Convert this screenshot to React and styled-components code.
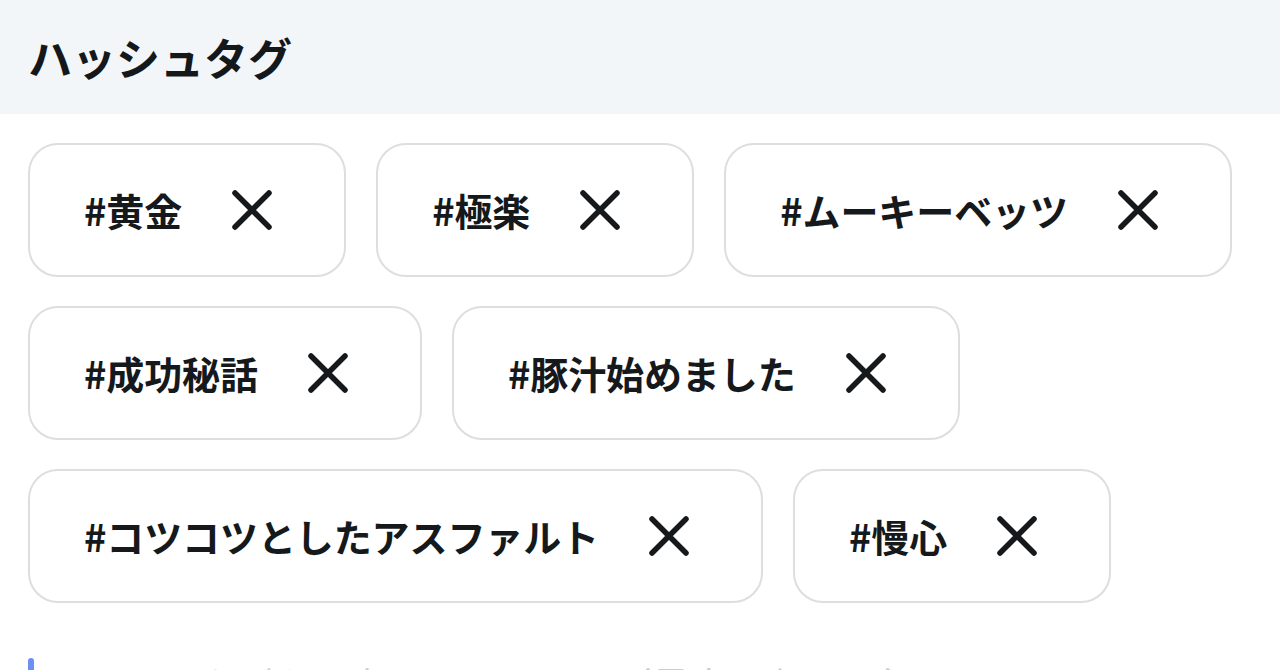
import React from "react";
import styled, { createGlobalStyle } from "styled-components";

const Global = createGlobalStyle`
  html, body { margin: 0; padding: 0; background: #ffffff; }
  body {
    font-family: "Noto Sans CJK JP", "Noto Sans", sans-serif;
    color: #14181b;
    overflow: hidden;
  }
`;

const Page = styled.div`
  width: 1280px;
  height: 670px;
  overflow: hidden;
  background: #ffffff;
`;

const Header = styled.header`
  height: 114px;
  background: #f3f6f9;
  display: flex;
  align-items: center;
  padding-left: 28px;
  box-sizing: border-box;
`;

const Title = styled.h1`
  margin: 0;
  font-size: 44px;
  font-weight: 700;
  letter-spacing: 0;
  color: #14181b;
  line-height: 1;
`;

const TagList = styled.div`
  display: flex;
  flex-wrap: wrap;
  gap: 29px 30px;
  padding: 29px 28px 0;
  width: 1280px;
  box-sizing: border-box;
`;

const Chip = styled.div`
  display: inline-flex;
  align-items: center;
  height: 134px;
  box-sizing: border-box;
  border: 2.5px solid #dedede;
  border-radius: 30px;
  padding: 0 72px 0 54px;
  background: #fff;
`;

const ChipLabel = styled.span`
  font-size: 38px;
  font-weight: 600;
  letter-spacing: -0.1px;
  line-height: 1;
  color: #15191c;
  white-space: nowrap;
`;

const RemoveButton = styled.button`
  border: none;
  background: none;
  padding: 0;
  margin-left: 50px;
  width: 40px;
  height: 40px;
  display: flex;
  align-items: center;
  justify-content: center;
  cursor: pointer;
  color: #15191c;
`;

const InputRow = styled.div`
  display: flex;
  align-items: flex-start;
  margin-top: 55px;
  padding-left: 28px;
  height: 40px;
`;

const Caret = styled.span`
  width: 6px;
  height: 32px;
  border-radius: 3px;
  background: #6d8ff0;
  flex: none;
`;

const Placeholder = styled.span`
  margin-left: 12px;
  margin-top: 3px;
  font-size: 38px;
  font-weight: 400;
  line-height: 1.2;
  color: #cccccc;
  white-space: nowrap;
`;

const CloseIcon = () => (
  <svg width="40" height="40" viewBox="0 0 40 40" fill="none">
    <path
      d="M3 3 L37 37 M37 3 L3 37"
      stroke="currentColor"
      strokeWidth="5.5"
      strokeLinecap="round"
    />
  </svg>
);

const tags = [
  "#黄金",
  "#極楽",
  "#ムーキーベッツ",
  "#成功秘話",
  "#豚汁始めました",
  "#コツコツとしたアスファルト",
  "#慢心",
];

export default function App() {
  return (
    <Page>
      <Global />
      <Header>
        <Title>ハッシュタグ</Title>
      </Header>
      <TagList>
        {tags.map((t) => (
          <Chip key={t}>
            <ChipLabel>{t}</ChipLabel>
            <RemoveButton aria-label="削除">
              <CloseIcon />
            </RemoveButton>
          </Chip>
        ))}
      </TagList>
      <InputRow>
        <Caret />
        <Placeholder>ハッシュタグを入力してください（最大10個まで）</Placeholder>
      </InputRow>
    </Page>
  );
}
